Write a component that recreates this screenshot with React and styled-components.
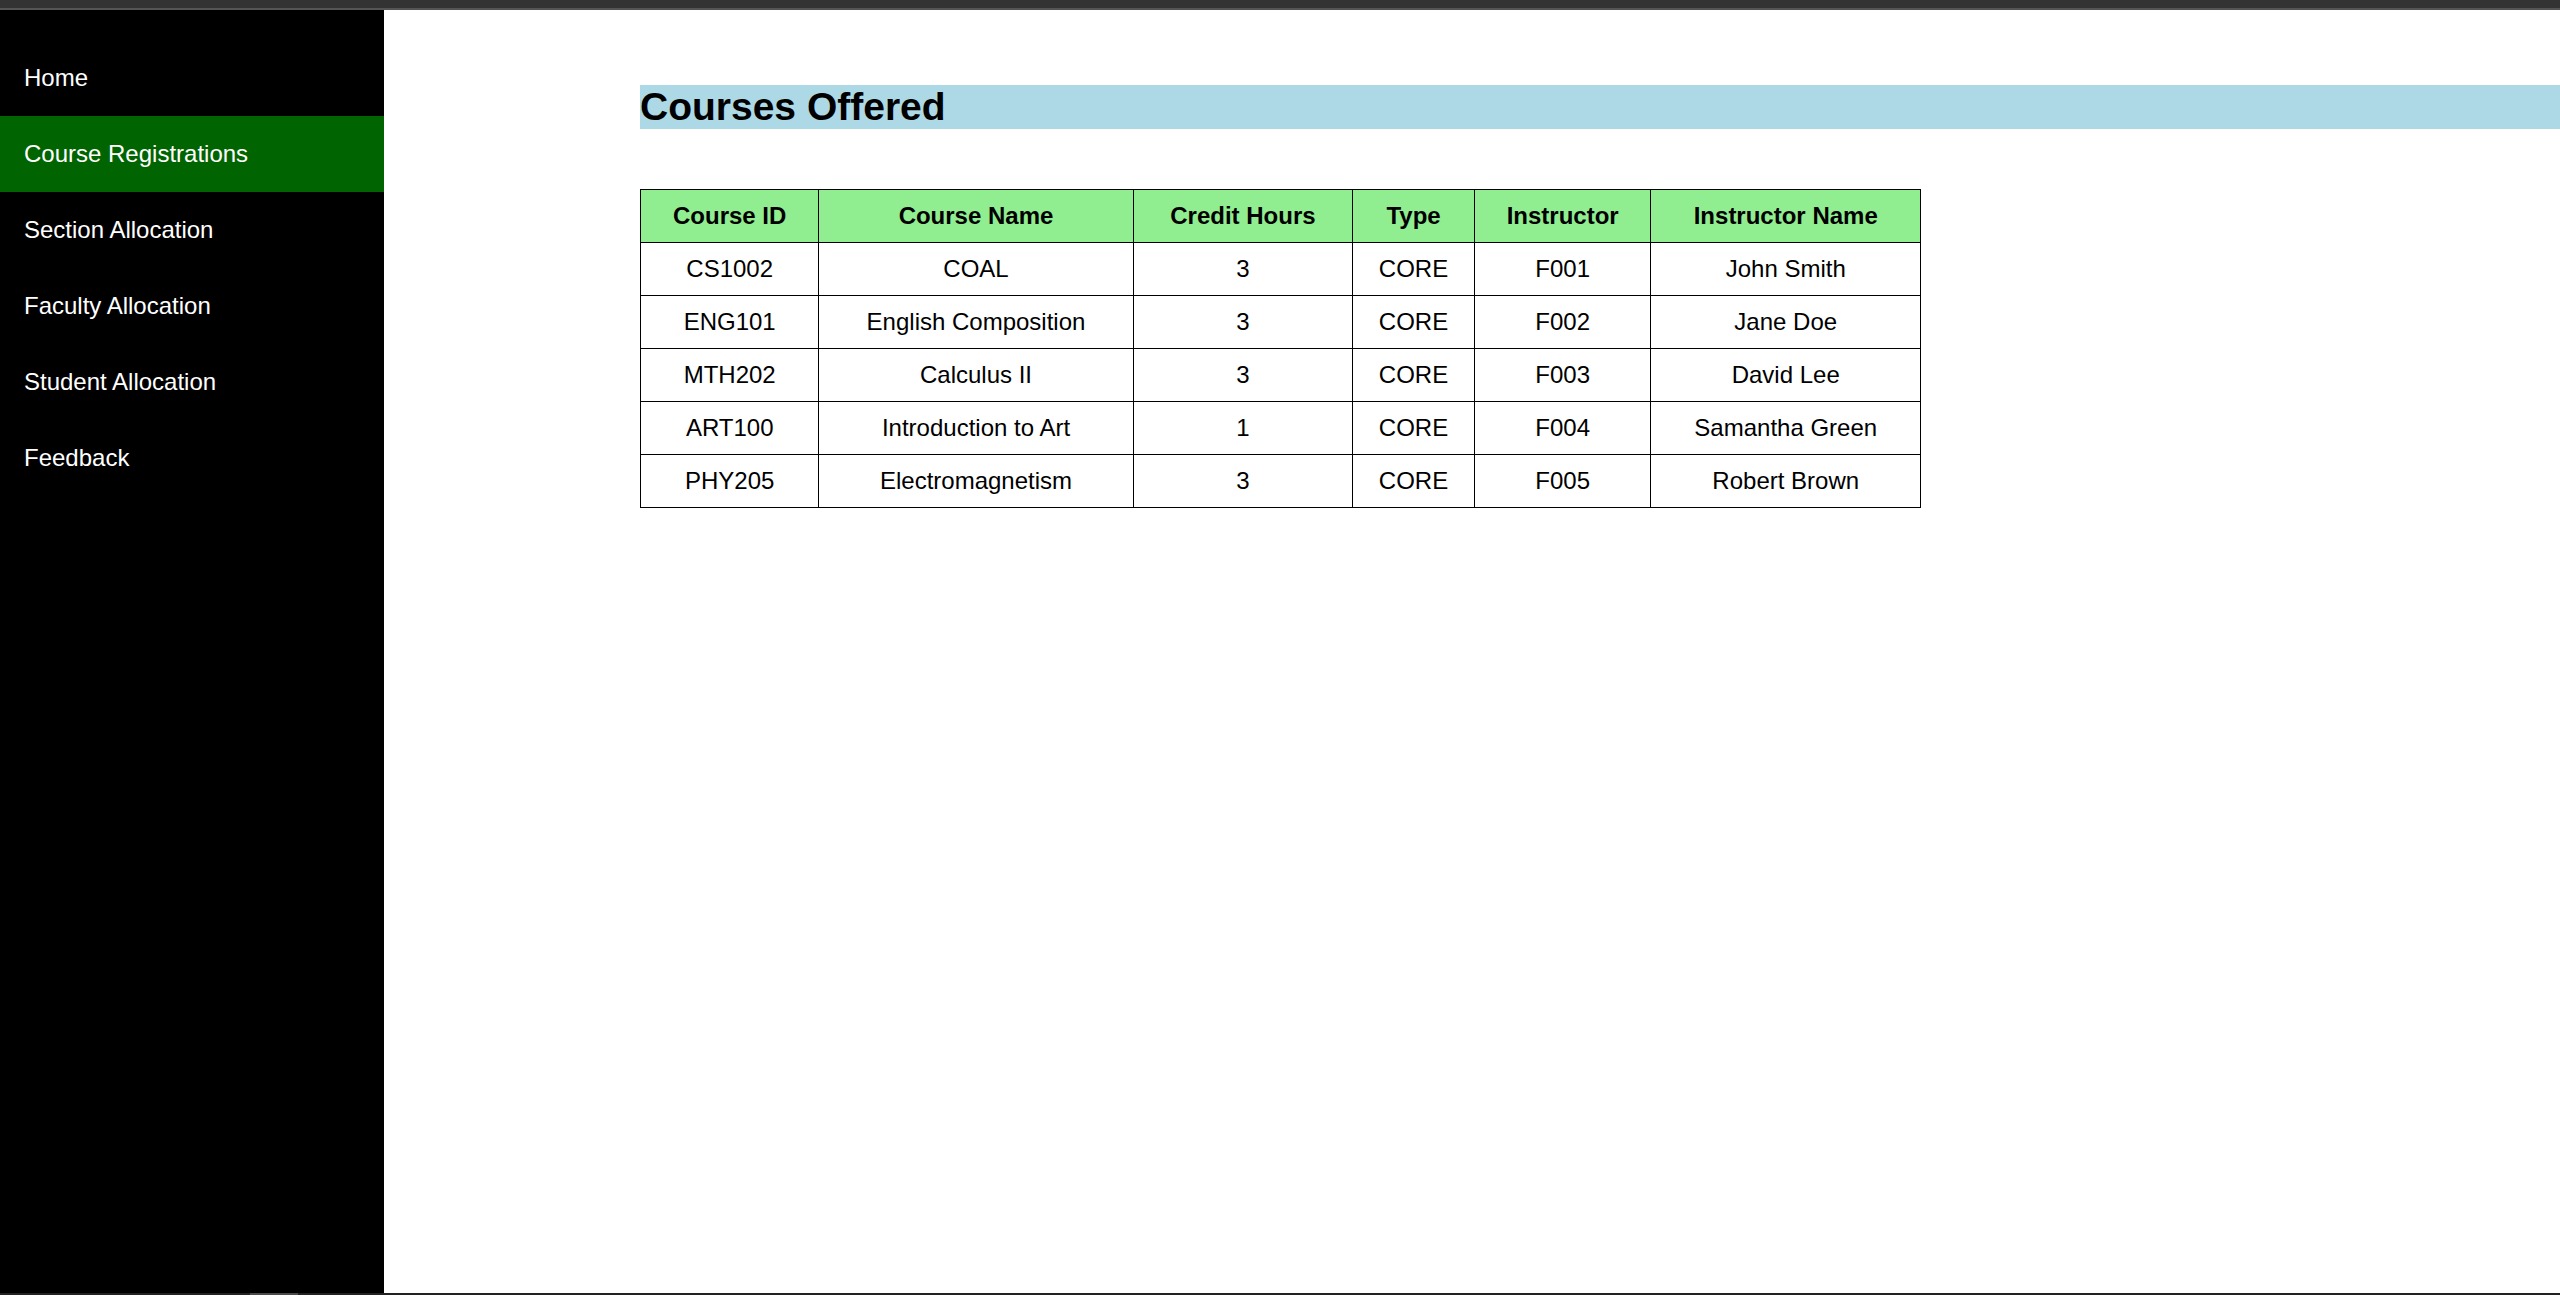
import React from "react";
import styled, { createGlobalStyle } from "styled-components";

const GlobalStyle = createGlobalStyle`
  html, body {
    margin: 0;
    padding: 0;
    background: #ffffff;
    font-family: "Liberation Sans", Arial, sans-serif;
  }
  * { box-sizing: border-box; }
`;

const Frame = styled.div`
  display: flex;
  flex-direction: column;
  width: 2560px;
  height: 1295px;
  overflow: hidden;
`;

const TopBar = styled.div`
  height: 10px;
  flex: 0 0 10px;
  background: #333333;
  border-bottom: 2px solid #555555;
`;

const Body = styled.div`
  display: flex;
  flex: 1 1 auto;
  min-height: 0;
`;

const Sidebar = styled.nav`
  width: 384px;
  flex: 0 0 384px;
  background: #000000;
  padding-top: 30px;
  display: flex;
  flex-direction: column;
`;

const NavItem = styled.a`
  display: block;
  padding: 24px 24px;
  font-size: 24px;
  line-height: 28px;
  color: #ffffff;
  text-decoration: none;
  background: ${(p) => (p.$active ? "#006400" : "transparent")};
`;

const Main = styled.main`
  flex: 1 1 auto;
  padding: 75px 0 0 256px;
  background: #ffffff;
`;

const Heading = styled.h1`
  margin: 0 0 60px 0;
  height: 44px;
  font-size: 39px;
  line-height: 44px;
  font-weight: bold;
  color: #000000;
  background: #add8e6;
`;

const Table = styled.table`
  width: 1281px;
  border-collapse: collapse;
  font-size: 24px;
  color: #000000;
`;

const Th = styled.th`
  background: #90ee90;
  border: 1px solid #000000;
  padding: 12px;
  font-weight: bold;
  text-align: center;
  line-height: 28px;
`;

const Td = styled.td`
  border: 1px solid #000000;
  padding: 12px;
  text-align: center;
  line-height: 28px;
`;

const ScrollTrack = styled.div`
  flex: 0 0 2px;
  height: 2px;
  background: #222222;
  display: flex;
`;

const ScrollThumb = styled.div`
  margin-left: 250px;
  width: 48px;
  background: #4a4a4a;
`;

const navItems = [
  "Home",
  "Course Registrations",
  "Section Allocation",
  "Faculty Allocation",
  "Student Allocation",
  "Feedback",
];

const headers = [
  "Course ID",
  "Course Name",
  "Credit Hours",
  "Type",
  "Instructor",
  "Instructor Name",
];

const rows = [
  ["CS1002", "COAL", "3", "CORE", "F001", "John Smith"],
  ["ENG101", "English Composition", "3", "CORE", "F002", "Jane Doe"],
  ["MTH202", "Calculus II", "3", "CORE", "F003", "David Lee"],
  ["ART100", "Introduction to Art", "1", "CORE", "F004", "Samantha Green"],
  ["PHY205", "Electromagnetism", "3", "CORE", "F005", "Robert Brown"],
];

export default function App() {
  return (
    <>
      <GlobalStyle />
      <Frame>
        <TopBar />
        <Body>
          <Sidebar>
            {navItems.map((item) => (
              <NavItem key={item} href="#" $active={item === "Course Registrations"}>
                {item}
              </NavItem>
            ))}
          </Sidebar>
          <Main>
            <Heading>Courses Offered</Heading>
            <Table>
              <thead>
                <tr>
                  {headers.map((h) => (
                    <Th key={h}>{h}</Th>
                  ))}
                </tr>
              </thead>
              <tbody>
                {rows.map((r) => (
                  <tr key={r[0]}>
                    {r.map((c, i) => (
                      <Td key={i}>{c}</Td>
                    ))}
                  </tr>
                ))}
              </tbody>
            </Table>
          </Main>
        </Body>
        <ScrollTrack>
          <ScrollThumb />
        </ScrollTrack>
      </Frame>
    </>
  );
}
